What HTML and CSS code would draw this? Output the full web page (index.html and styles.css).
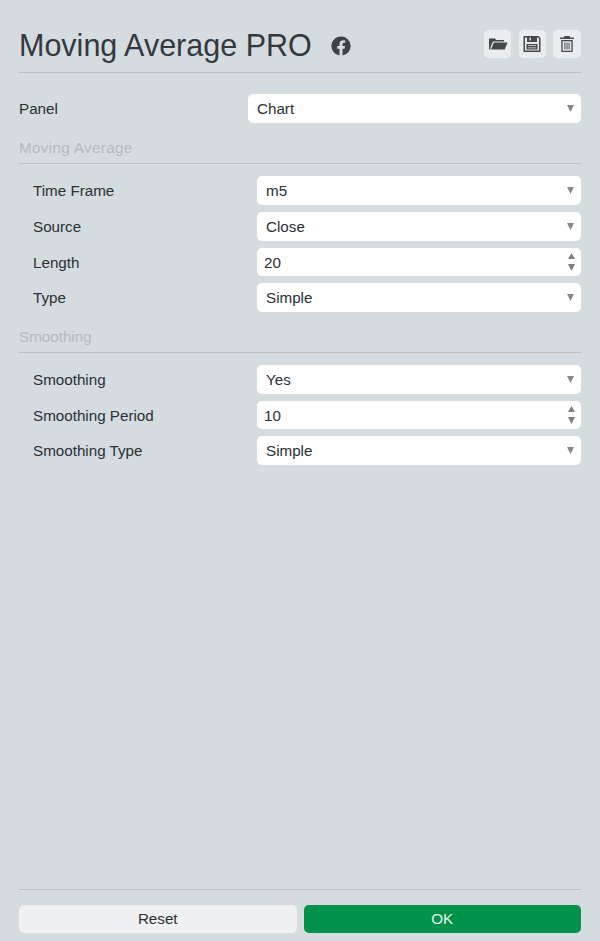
FILE: index.html
```html
<!DOCTYPE html>
<html lang="en">
<head>
    <meta charset="UTF-8">
    <title>Moving Average PRO</title>
    <link rel="stylesheet" href="styles.css">
</head>
<body>
    <div class="header">
        <h1>Moving Average PRO</h1>
        <svg class="fb-icon" viewBox="0 0 20 20" width="20" height="20">
            <path fill-rule="evenodd" d="M10 .5a9.500 9.500 0 0 0-1.500 18.900v-6.700H6.200v-2.700h2.300V8c0-2.400 1.400-3.700 3.600-3.700 1 0 2.100.2 2.100.2v2.300H13c-1.200 0-1.500.7-1.500 1.500v1.700H14l-.4 2.700h-2.100v6.700A9.500 9.500 0 0 0 10 .5z"/>
        </svg>
        <div class="tools">
            <button class="tool-btn" title="Open">
                <svg viewBox="0 0 20 20" width="20" height="20">
                    <path d="M1 4.500h6l1.200 1.500H16v1.500H5L2.500 13V15.500H1z"/>
                    <path d="M5.800 8.500H19.500L16.700 15.500H3z"/>
                </svg>
            </button>
            <button class="tool-btn" title="Save">
                <svg viewBox="0 0 20 20" width="20" height="20">
                    <path fill-rule="evenodd" d="M1.500 2h15l2 2v14h-17zM3 3.400v13.200h14V4.600l-1.200-1.200H15V8H5V3.400zM7.500 3.400v3.200h1.400V3.400zM4.500 10h11v5.500h-11zM5.800 11.200v.8h8.400v-.8zM5.800 13.400v.8h8.400v-.8z"/>
                </svg>
            </button>
            <button class="tool-btn" title="Delete">
                <svg viewBox="0 0 20 20" width="20" height="20">
                    <path fill-rule="evenodd" d="M7.500 2h5l.5 1.500h4V5H3V3.500h4zM4.300 6h11.400v12H4.300zM5.600 7.300v9.400h8.800V7.300z"/>
                    <path d="M7.400 8.500h1v7h-1zM9.500 8.500h1v7h-1zM11.600 8.500h1v7h-1z"/>
                </svg>
            </button>
        </div>
    </div>

    <div class="row row-top">
        <label>Panel</label>
        <select><option>Chart</option></select>
    </div>

    <div class="section-title section-title-wide">Moving Average</div>
    <div class="group">
        <div class="row">
            <label>Time Frame</label>
            <select><option>m5</option></select>
        </div>
        <div class="row">
            <label>Source</label>
            <select><option>Close</option></select>
        </div>
        <div class="row">
            <label>Length</label>
            <div class="number">
                <input type="text" value="20">
                <svg class="spin" viewBox="0 0 7 18" width="7" height="18"><path d="M3.500 0 7 6H0zM0 11h7l-3.500 7z"/></svg>
            </div>
        </div>
        <div class="row">
            <label>Type</label>
            <select><option>Simple</option></select>
        </div>
    </div>

    <div class="section-title">Smoothing</div>
    <div class="group">
        <div class="row">
            <label>Smoothing</label>
            <select><option>Yes</option></select>
        </div>
        <div class="row">
            <label>Smoothing Period</label>
            <div class="number">
                <input type="text" value="10">
                <svg class="spin" viewBox="0 0 7 18" width="7" height="18"><path d="M3.500 0 7 6H0zM0 11h7l-3.500 7z"/></svg>
            </div>
        </div>
        <div class="row">
            <label>Smoothing Type</label>
            <select><option>Simple</option></select>
        </div>
    </div>

    <div class="footer">
        <button class="btn">Reset</button>
        <button class="btn btn-ok">OK</button>
    </div>
</body>
</html>
```

FILE: styles.css
```css
* {
    box-sizing: border-box;
}

body {
    font-family: "Liberation Sans", Arial, sans-serif;
    font-size: 15.2px;
    color: #2b3034;
    background-color: #d5dce0;
    margin: 0;
    padding: 0 19px 8px;
    height: 941px;
    display: flex;
    flex-direction: column;
    overflow: hidden;
}

.header {
    display: flex;
    align-items: center;
    height: 73px;
    padding-top: 30px;
    padding-bottom: 15px;
    border-bottom: 1px solid #b9c1c6;
}

h1 {
    font-size: 30.5px;
    font-weight: normal;
    color: #33393e;
    margin: 3px 0 0;
}

.fb-icon {
    fill: #3c4347;
    margin-top: 4px;
    margin-left: 19.5px;
}

.tools {
    display: flex;
    gap: 7.2px;
    margin-left: auto;
}

.tool-btn {
    width: 27.6px;
    height: 28px;
    padding: 0;
    border: none;
    border-radius: 5px;
    background: #e9edef;
    display: flex;
    align-items: center;
    justify-content: center;
}

.tool-btn svg {
    fill: #42484c;
}

.row {
    display: flex;
    align-items: center;
    justify-content: space-between;
}

.row-top {
    margin-top: 21px;
}

.row-top select {
    width: 333px;
}

label {
    color: #2b3034;
}

select,
.number {
    width: 324px;
}

select {
    appearance: none;
    height: 29px;
    padding: 0 9px;
    border: none;
    border-radius: 5px;
    background: #fff url("data:image/svg+xml,%3Csvg xmlns='http://www.w3.org/2000/svg' width='7' height='7'%3E%3Cpath d='M0 0h7L3.500 7z' fill='%23888'/%3E%3C/svg%3E") no-repeat right 7px center;
    font: inherit;
    color: #2b3034;
}

.number {
    position: relative;
}

.number input {
    display: block;
    width: 100%;
    height: 28px;
    padding: 0 7px;
    border: none;
    border-radius: 5px;
    background: #fff;
    font: inherit;
    color: #2b3034;
}

.spin {
    position: absolute;
    right: 6px;
    top: 5px;
    fill: #808080;
}

.section-title {
    color: #b3babf;
    margin-top: 16px;
    padding-bottom: 6px;
    border-bottom: 1px solid #b9c1c6;
    line-height: 18px;
}

.section-title-wide {
    letter-spacing: .36px;
}

.group {
    display: flex;
    flex-direction: column;
    gap: 7px;
    margin-top: 12px;
    padding-left: 14px;
}

.footer {
    display: flex;
    gap: 7px;
    margin-top: auto;
    padding-top: 15px;
    border-top: 1px solid #b9c1c6;
}

.btn {
    flex: 1;
    height: 28px;
    padding: 0 0 1px;
    border: none;
    border-radius: 5px;
    background: #eef0f2;
    font: inherit;
    color: #2b3034;
}

.btn-ok {
    background: #00924a;
    color: #e4f5ea;
}
```
